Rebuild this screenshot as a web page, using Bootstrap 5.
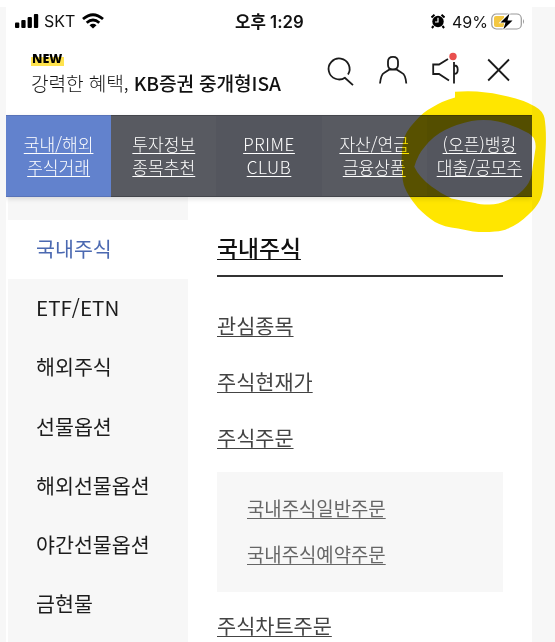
<!DOCTYPE html>
<html lang="ko">
<head>
<meta charset="utf-8">
<meta name="viewport" content="width=device-width, initial-scale=1">
<title>국내주식</title>
<link href="https://cdn.jsdelivr.net/npm/bootstrap@5.3.0/dist/css/bootstrap.min.css" rel="stylesheet">
<style>
body{font-family:"Noto Sans CJK KR",sans-serif;background:#f7f7f7;height:642px;color:#1c1c1c}
.top-strip{height:7px}
.phone{width:526px;height:635px;margin-left:6px}
.status-bar{height:28px;padding:0 7px 0 9px;color:#111;font-family:Inter,"Noto Sans CJK KR",sans-serif;font-size:16px;line-height:28px}
.carrier{margin-left:5px}
.wifi{margin-left:7px}
.charge{margin:1px 3px 0 7px}
.clock{font-weight:600;font-size:16.8px;left:229px;top:1px}
.promo{height:80px;padding:15px 19px 0 25px}
.new-tag{font:800 12.5px/14px "Open Sans",sans-serif;width:33px;height:15px;padding:1px 0 0 1px;margin-top:1px;background:linear-gradient(#fff 6px,#ffe34d 6px);color:#000}
.promo-text{font-size:19.2px;line-height:28px;margin-top:3px;letter-spacing:-.15px;color:#111}
.promo-text .thin{font-weight:300}
.promo-text .strong{font-weight:500}
.main-tabs{height:82px;box-shadow:0 2px 5px rgba(0,0,0,.13);position:relative;z-index:1}
.main-tabs a{color:#fff;font-size:17.1px;line-height:23px;font-weight:300;background:#54565e;padding-bottom:2px;border-top:1px solid #44464c;border-bottom:1px solid #44464c}
.main-tabs a:nth-child(even){background:#585a61}
.main-tabs a.current{background:#6282cd;border-color:#5873b8}
.main-tabs .latin{font-size:17.1px;letter-spacing:.6px}
.ul{text-decoration:underline;text-decoration-thickness:1px;text-underline-offset:2px;text-decoration-skip-ink:none}
.side{width:182px;padding-top:23px;background:linear-gradient(90deg,#fff 1.5px,#f7f7f7 1.5px)}
.side a{height:59.2px;padding-left:30px;font-size:20.6px;line-height:56px;color:#1c1c1c;text-decoration:none}
.side a.current{background:#fff;color:#4b69b1}
.content{width:286px;margin-left:29px}
.content h1{font-size:22.8px;line-height:32px;height:45px;margin:35px 0 0;font-weight:500;color:#111;border-bottom:2px solid #333}
.content a{color:#444;font-size:20.8px}
.entries{padding-top:20px}
.entries a{line-height:56px;height:56px}
.sub-box{height:120px;background:#f7f7f7;padding:13px 30px 0;margin-top:7px}
.sub-box a{font-size:18.85px;line-height:46px;height:46px;color:#666}
.last{line-height:56px;margin-top:5px}
.marker{left:0;top:0;z-index:5;mix-blend-mode:multiply;pointer-events:none}
</style>
<script src="https://cdn.jsdelivr.net/npm/bootstrap@5.3.0/dist/js/bootstrap.bundle.min.js"></script>
</head>
<body class="position-relative overflow-hidden">
<div class="top-strip bg-white"></div>
<div class="phone bg-white overflow-hidden">
  <div class="status-bar d-flex align-items-center position-relative">
    <svg width="24" height="16" viewBox="0 0 24 16"><g fill="#000"><rect y="9.500" width="4.300" height="5.500" rx="1"/><rect x="6.300" y="7" width="4.300" height="8" rx="1"/><rect x="12.600" y="4" width="4.300" height="11" rx="1"/><rect x="18.900" y="1" width="4.300" height="14" rx="1"/></g></svg>
    <span class="carrier">SKT</span>
    <svg class="wifi" width="22" height="16" viewBox="0 0 22 16"><g fill="none" stroke="#000" stroke-width="2.800"><path d="M1 6Q11-2.600 21 6"/><path d="M4.700 9.800Q11 4.200 17.300 9.800"/></g><path d="M7.500 12.200Q11 9.300 14.500 12.200L11 15.600Z"/></svg>
    <span class="clock position-absolute text-nowrap">오후 1:29</span>
    <svg class="ms-auto" width="14" height="15" viewBox="0 0 14 15"><circle cx="7" cy="7.500" r="5.700"/><path d="M.5 3.500 3.500.8M13.500 3.500 10.500.8M2.600 12 .9 14M11.400 12l1.700 2" stroke="#000" stroke-width="2"/><path d="M7 3.700V8H4" fill="none" stroke="#fff" stroke-width="1.200"/></svg>
    <span class="charge">49%</span>
    <svg class="batt" width="34" height="17" viewBox="0 0 34 17"><rect x=".8" y="1" width="29.500" height="15" rx="4.500" fill="#fff" stroke="#999" stroke-width="1.200"/><path d="M5 3h8v11H5a2 2 0 0 1-2-2V5a2 2 0 0 1 2-2z" fill="#f3c742"/><path d="M32 6q2 2.500 0 5z" fill="#999"/><path d="M18.500.5 9.500 9.500h5L12.300 16.500 21.500 7.600h-5z" stroke="#fff" stroke-width="1.600" paint-order="stroke"/></svg>
  </div>
  <div class="promo d-flex justify-content-between">
    <div>
      <div class="new-tag">NEW</div>
      <div class="promo-text text-nowrap"><span class="thin">강력한 혜택,</span> <span class="strong">KB증권 중개형ISA</span></div>
    </div>
    <svg class="tools" width="190" height="40" viewBox="322.500 50 190 40" fill="none" stroke="#1b1b1b" stroke-width="1.800">
      <path d="M344.800 77.400A10.500 10.500 0 1 1 347.500 74.500M344 77.500l8.500 7.700"/>
      <path d="M387.500 61.500q0-4.700 5-4.700t5 4.700v3.500q0 4.500-5 4.500t-5-4.500zM379.500 83.500q1-9 4-10.500l5.500-3.500h7l5.500 3.500q3.500 1.500 4.300 10.500"/>
      <path d="M447.500 59l-9 5.500h-5.800v9.500h5.800l10 6.500M453.500 62v21.500M454 65.500q3.200 0 3.200 4.200t-3.200 4.200"/>
      <circle cx="452.500" cy="56.500" r="3.700" fill="#e9504e" stroke="none"/>
      <path d="M487.700 59.500 508.500 80.500M508.500 59.500 487.700 80.500"/>
    </svg>
  </div>
  <nav class="main-tabs d-flex text-center">
    <a href="#" class="current col d-flex flex-column justify-content-center text-decoration-none"><span class="ul">국내/해외</span><span class="ul">주식거래</span></a>
    <a href="#" class="col d-flex flex-column justify-content-center text-decoration-none"><span class="ul">투자정보</span><span class="ul">종목추천</span></a>
    <a href="#" class="latin col d-flex flex-column justify-content-center text-decoration-none"><span class="ul">PRIME</span><span class="ul">CLUB</span></a>
    <a href="#" class="col d-flex flex-column justify-content-center text-decoration-none"><span class="ul">자산/연금</span><span class="ul">금융상품</span></a>
    <a href="#" class="col d-flex flex-column justify-content-center text-decoration-none"><span class="ul">(오픈)뱅킹</span><span class="ul">대출/공모주</span></a>
  </nav>
  <div class="d-flex h-100">
    <aside class="side flex-shrink-0 d-flex flex-column">
      <a href="#" class="current">국내주식</a><a href="#">ETF/ETN</a><a href="#">해외주식</a><a href="#">선물옵션</a><a href="#">해외선물옵션</a><a href="#">야간선물옵션</a><a href="#">금현물</a>
    </aside>
    <main class="content">
      <h1 class="ul">국내주식</h1>
      <div class="entries d-flex flex-column">
        <a href="#" class="ul">관심종목</a><a href="#" class="ul">주식현재가</a><a href="#" class="ul">주식주문</a>
      </div>
      <div class="sub-box d-flex flex-column">
        <a href="#" class="ul">국내주식일반주문</a><a href="#" class="ul">국내주식예약주문</a>
      </div>
      <a href="#" class="last ul d-block">주식차트주문</a>
    </main>
  </div>
</div>
<svg class="marker position-absolute" width="555" height="642" viewBox="0 0 555 642"><path fill="#ffe600" fill-rule="evenodd" d="M455 91.700Q466 91 477 91.500Q493 92.500 508 96.500Q524 100 535 106.500Q543 111 544.500 118Q546.500 130 545.700 148L543.700 182Q543 193 540 200Q536 208 528 215Q519 224 508 228.500Q503 231 495 231.500Q484 232.500 473 231.500L458 228.500Q444 227 435 222Q427 217 418 208Q408 196 405 188Q402 182 402 168Q401 152 403 142Q405 132 415 121.500Q423 112 432 107.500Q442 101 455 97.500ZM414.300 166.700Q418 154 425 146.500Q433 136 445 130Q457 124 471.500 121Q485 119 498 121.500Q513 125 525 131.500Q533 135 534.500 140Q536 144 535.500 148.500L531.500 175Q530 183 523 190Q517 196 508 200Q497 205 488 204.500Q480 204.500 475 203Q463 201 451.500 198.500Q440 193 431.500 186.500Q419 177 414.300 166.700Z"/></svg>
</body>
</html>
